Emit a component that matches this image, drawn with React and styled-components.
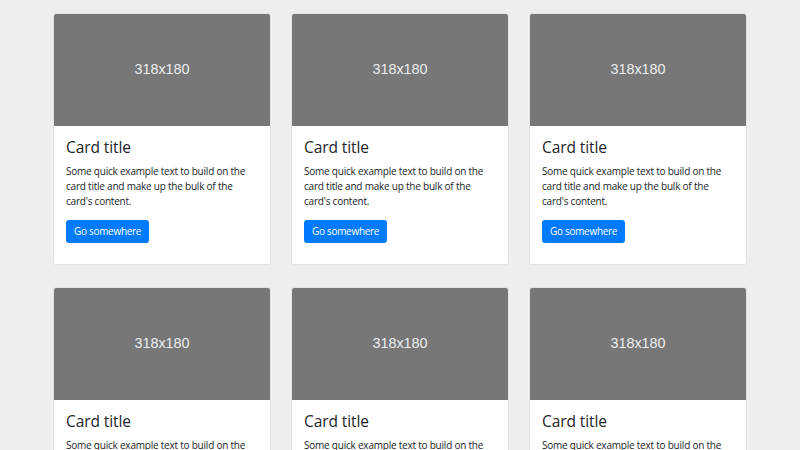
import React from "react";
import styled, { createGlobalStyle } from "styled-components";

const Global = createGlobalStyle`
  html, body { margin: 0; padding: 0; background: #eeeeee; }
  body { font-family: "Open Sans", "Noto Sans", sans-serif; color: #212529; }
  * { box-sizing: border-box; }
`;

const Grid = styled.div`
  width: 694px;
  margin: 0 auto;
  padding-top: 13px;
  display: grid;
  grid-template-columns: repeat(3, 218px);
  column-gap: 20px;
  row-gap: 22px;
`;

const Card = styled.div`
  background: #fff;
  border: 1px solid rgba(0, 0, 0, 0.1);
  border-radius: 3px;
  overflow: hidden;
  display: flex;
  flex-direction: column;
`;

const Thumb = styled.div`
  height: 113px;
  background: #777777;
  color: #eceeef;
  display: flex;
  align-items: center;
  justify-content: center;
  font-family: "Liberation Sans", Arial, sans-serif;
  font-size: 14.4px;
  padding-bottom: 1px;
  margin: -1px -1px 0;
`;

const Body = styled.div`
  padding: 12px 12px 21px;
`;

const Title = styled.h5`
  margin: 0 0 8px;
  font-size: 15.5px;
  font-weight: 400;
  line-height: 18px;
  letter-spacing: -0.1px;
`;

const Text = styled.p`
  margin: 0 0 9px;
  font-size: 10px;
  line-height: 15px;
  letter-spacing: -0.22px;
`;

const Button = styled.a`
  display: inline-block;
  height: 23px;
  line-height: 23px;
  padding: 0 8px;
  background: #007bff;
  color: #fff;
  font-size: 10px;
  letter-spacing: -0.3px;
  border-radius: 3px;
  text-decoration: none;
`;

const cards = Array.from({ length: 6 });

export default function App() {
  return (
    <>
      <Global />
      <Grid>
        {cards.map((_, i) => (
          <Card key={i}>
            <Thumb>318x180</Thumb>
            <Body>
              <Title>Card title</Title>
              <Text>
                Some quick example text to build on the card title and make up
                the bulk of the card's content.
              </Text>
              <Button href="#">Go somewhere</Button>
            </Body>
          </Card>
        ))}
      </Grid>
    </>
  );
}
